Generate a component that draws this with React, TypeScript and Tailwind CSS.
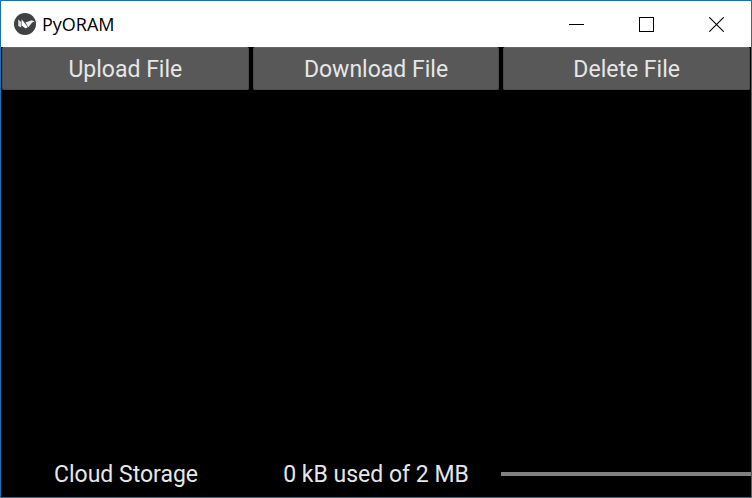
import React from "react";

const actions = ["Upload File", "Download File", "Delete File"];

function AppIcon() {
  return (
    <svg className="size-[22px] shrink-0" viewBox="0 0 22 22" aria-hidden="true">
      <circle cx="11" cy="11" r="11" fill="#3f4143" />
      <path d="M4.2 6.4 L7.2 9 L7.2 14.4 L4.2 13 Z" fill="#dedede" />
      <path d="M7.6 6.2 L13.8 14 L11.8 15.4 L7.6 12.6 Z" fill="#ffffff" />
      <path d="M11.4 9.6 L17.8 7.2 L20.6 8.6 L18.2 9.4 L14.4 14.2 Z" fill="#f0f0f0" />
    </svg>
  );
}

function TitleBar() {
  return (
    <header className="flex h-[46px] shrink-0 items-center justify-between bg-white pl-[13px]">
      <div className="flex items-center gap-1.5">
        <AppIcon />
        <h1 className="font-['Open_Sans','Noto_Sans',sans-serif] text-[18px] leading-6 text-black">PyORAM</h1>
      </div>
      <div className="flex h-full text-black">
        <button type="button" aria-label="Minimize" className="flex w-[70px] items-center justify-center">
          <svg className="size-[15px]" viewBox="0 0 15 15" shapeRendering="crispEdges" aria-hidden="true">
            <path d="M0 7.5H15" stroke="currentColor" />
          </svg>
        </button>
        <button type="button" aria-label="Maximize" className="flex w-[70px] items-center justify-center">
          <svg className="size-[15px]" viewBox="0 0 15 15" shapeRendering="crispEdges" aria-hidden="true">
            <rect x="0.5" y="0.5" width="14" height="14" fill="none" stroke="currentColor" />
          </svg>
        </button>
        <button type="button" aria-label="Close" className="flex w-[70px] items-center justify-center">
          <svg className="size-[15px]" viewBox="0 0 15 15" aria-hidden="true">
            <path d="M0.3 0.3L14.7 14.7M14.7 0.3L0.3 14.7" stroke="currentColor" strokeWidth="1.1" />
          </svg>
        </button>
      </div>
    </header>
  );
}

export default function App() {
  return (
    <div className="flex min-h-screen flex-col border border-[#1a6fb8] bg-black font-[Roboto,sans-serif] text-[23px] leading-7 text-[#e6e6e6]">
      <TitleBar />
      <nav className="grid grid-cols-3 gap-1 px-px">
        {actions.map((label) => (
          <button
            key={label}
            type="button"
            className="h-[43px] rounded-xs border border-[#4c4c4c] border-t-[#666666] bg-[#585858] pt-0.5"
          >
            {label}
          </button>
        ))}
      </nav>
      <main className="flex-1" />
      <footer className="grid h-[46px] grid-cols-3 items-center text-center">
        <span id="storage-label" className="pt-0.5">Cloud Storage</span>
        <span className="pt-0.5">0 kB used of 2 MB</span>
        <div
          role="progressbar"
          aria-labelledby="storage-label"
          aria-valuemin={0}
          aria-valuemax={2048}
          aria-valuenow={0}
          className="h-1 bg-[#808080]"
        />
      </footer>
    </div>
  );
}
